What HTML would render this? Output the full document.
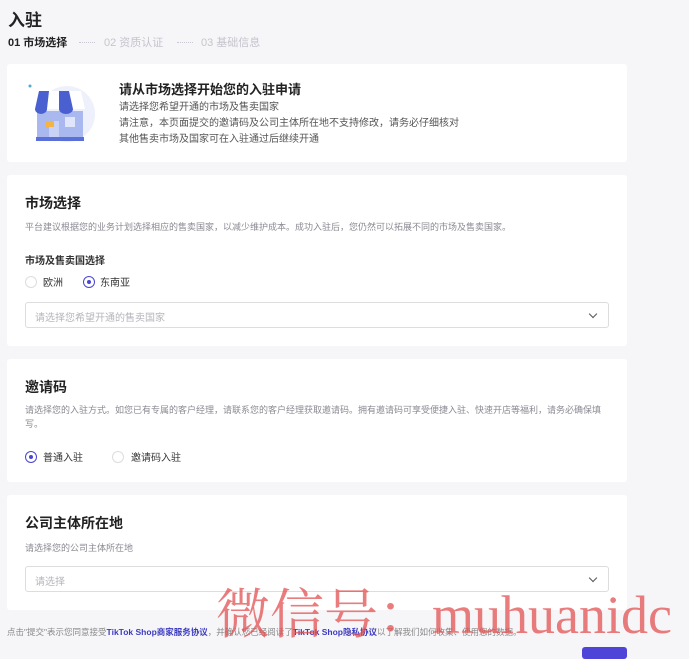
<!DOCTYPE html>
<html><head><meta charset="utf-8"><style>
*{margin:0;padding:0;box-sizing:border-box}
body{width:689px;height:654px;overflow:hidden;background:#f6f6f9;font-family:"Liberation Sans","Noto Sans CJK SC",sans-serif;color:#222;position:relative}
.a{position:absolute;white-space:nowrap}
.card{position:absolute;left:7px;width:620px;background:#fff;border-radius:3px}
.h{font-size:14px;font-weight:bold;color:#222}
.d{font-size:9px;color:#8a8a93}
.r{position:absolute;width:12px;height:12px;border-radius:50%;border:1px solid #ddd;background:#fff}
.r.on{border-color:#4a44d4}
.r.on:after{content:"";position:absolute;left:3px;top:3px;width:4px;height:4px;border-radius:50%;background:#4a44d4}
.sel{position:absolute;left:18px;width:584px;height:26px;border:1px solid #ddd;border-radius:3px;font-size:10px;color:#b5b5bc;padding:6px 9px}
.sel:after{content:"";position:absolute;right:12px;top:8px;width:5px;height:5px;border-right:1px solid #555;border-bottom:1px solid #555;transform:rotate(45deg)}
.dots{position:absolute;top:42px;width:16px;border-top:1.5px dotted #c8c8d0}
</style></head><body>
<div class="a" style="left:8px;top:6px;font-size:17px;font-weight:bold">入驻</div>
<div class="a" style="left:8px;top:34px;font-size:11px;font-weight:bold;color:#222">01 市场选择</div>
<div class="dots" style="left:79px"></div>
<div class="a" style="left:104px;top:34px;font-size:11px;color:#c4c4cc">02 资质认证</div>
<div class="dots" style="left:177px"></div>
<div class="a" style="left:201px;top:34px;font-size:11px;color:#c4c4cc">03 基础信息</div>

<div class="card" style="top:64px;height:98px">
<svg style="position:absolute;left:18px;top:17px" width="75" height="65" viewBox="0 0 75 65">
<circle cx="42" cy="33" r="28" fill="#eef0fb"/>
<rect x="12" y="30" width="46" height="30" fill="#aab8f0"/>
<rect x="11" y="56" width="48" height="4" fill="#5a6fd8"/>
<path d="M10 28 L14 10 H56 L60 28 Z" fill="#fff"/>
<path d="M14 10 H24 L22 28 H10 Z M34 10 H44 L48 28 H34 Z" fill="#4a60d0"/>
<path d="M10 28 a6 5 0 0 0 12 0 M34 28 a7 5 0 0 0 14 0" fill="#4a60d0"/>
<rect x="24" y="40" width="10" height="16" fill="#c8d2f7"/>
<rect x="21" y="40" width="8" height="6" fill="#f5b342"/>
<rect x="40" y="36" width="10" height="10" fill="#dfe5fb"/>
<circle cx="5" cy="5" r="1.5" fill="#5ac"/>
</svg>
<div class="a" style="left:112px;top:15px;font-size:13px;font-weight:bold">请从市场选择开始您的入驻申请</div>
<div class="a" style="left:112px;top:36px;font-size:10px;color:#555;line-height:16px">请选择您希望开通的市场及售卖国家<br>请注意，本页面提交的邀请码及公司主体所在地不支持修改，请务必仔细核对<br>其他售卖市场及国家可在入驻通过后继续开通</div>
</div>

<div class="card" style="top:175px;height:171px">
<div class="a h" style="left:18px;top:18px">市场选择</div>
<div class="a d" style="left:18px;top:45px">平台建议根据您的业务计划选择相应的售卖国家，以减少维护成本。成功入驻后，您仍然可以拓展不同的市场及售卖国家。</div>
<div class="a" style="left:18px;top:77px;font-size:10px;font-weight:bold;color:#333">市场及售卖国选择</div>
<div class="r" style="left:18px;top:101px"></div><div class="a" style="left:36px;top:99px;font-size:10px;color:#333">欧洲</div>
<div class="r on" style="left:76px;top:101px"></div><div class="a" style="left:93px;top:99px;font-size:10px;color:#333">东南亚</div>
<div class="sel" style="top:127px">请选择您希望开通的售卖国家</div>
</div>

<div class="card" style="top:359px;height:123px">
<div class="a h" style="left:18px;top:18px">邀请码</div>
<div class="a d" style="left:18px;top:44px;line-height:14px">请选择您的入驻方式。如您已有专属的客户经理，请联系您的客户经理获取邀请码。拥有邀请码可享受便捷入驻、快速开店等福利，请务必确保填<br>写。</div>
<div class="r on" style="left:18px;top:92px"></div><div class="a" style="left:36px;top:90px;font-size:10px;color:#333">普通入驻</div>
<div class="r" style="left:105px;top:92px"></div><div class="a" style="left:124px;top:90px;font-size:10px;color:#333">邀请码入驻</div>
</div>

<div class="card" style="top:495px;height:115px">
<div class="a h" style="left:18px;top:18px">公司主体所在地</div>
<div class="a d" style="left:18px;top:46px">请选择您的公司主体所在地</div>
<div class="sel" style="top:71px">请选择</div>
</div>

<div class="a" style="left:7px;top:626px;font-size:8.5px;color:#888">点击"提交"表示您同意接受<b style="color:#3b3bbf">TikTok Shop商家服务协议</b>，并确认您已经阅读了<b style="color:#3b3bbf">TikTok Shop隐私协议</b>以了解我们如何收集、使用您的数据。</div>
<div class="a" style="left:582px;top:647px;width:45px;height:12px;background:#4e45d8;border-radius:3px"></div>
<div class="a" style="left:216px;top:583px;font-size:54px;line-height:64px;color:rgba(225,80,80,.75);font-family:'Liberation Serif','Noto Serif CJK SC',serif">微信号：muhuanidc</div>
</body></html>
